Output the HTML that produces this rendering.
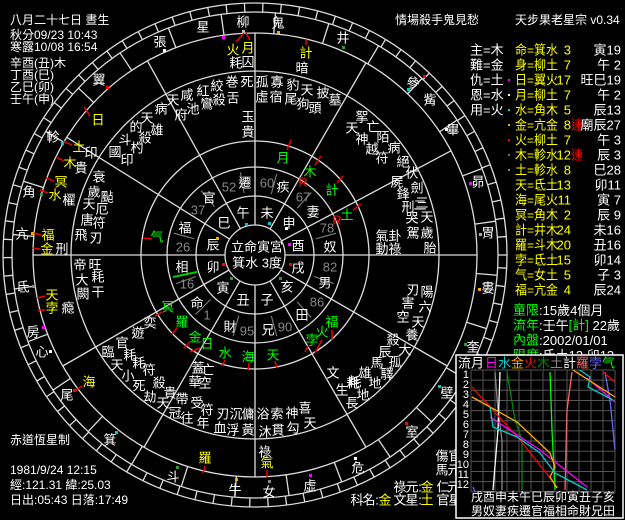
<!DOCTYPE html>
<html><head><meta charset="utf-8">
<style>
html,body{margin:0;padding:0;background:#000;}
svg{display:block}
text{font-family:"Liberation Sans","Noto Sans CJK TC","WenQuanYi Zen Hei",sans-serif;}
.c text{font-size:13px;fill:#fff;text-anchor:middle;dominant-baseline:central}
.y{fill:#ff0 !important}.g{fill:#0f0 !important}.r{fill:#f00 !important}.gr{fill:#888 !important}
.p text{font-size:13px;dominant-baseline:central}
</style></head><body>
<svg id="s" width="625" height="520" viewBox="0 0 625 520" xmlns="http://www.w3.org/2000/svg">
<rect width="625" height="520" fill="#000"/>
<g id="lines" stroke="#ddd" stroke-width="1.3" fill="none">
<circle cx="255" cy="255" r="30"/>
<circle cx="255" cy="255" r="59"/>
<circle cx="255" cy="255" r="88"/>
<circle cx="255" cy="255" r="114"/>
<circle cx="255" cy="255" r="184"/>
<circle cx="255" cy="255" r="222"/>
<circle cx="255" cy="255" r="243"/>
<circle cx="255" cy="255" r="252"/>
<line x1="173" y1="277" x2="197" y2="272" stroke="#0c0" stroke-width="2"/>
</g>
<g class="c">
<text x="257" y="247">立命寅宮</text><text x="257" y="263">箕水 3度</text>
<text x="243" y="213">午</text><text x="267" y="213">未</text><text x="289" y="223">申</text><text x="298" y="246">酉</text><text x="298" y="268">戌</text><text x="287" y="287">亥</text><text x="267" y="300">子</text><text x="243" y="300">丑</text><text x="223" y="288">寅</text><text x="213" y="267">卯</text><text x="213" y="245">辰</text><text x="224" y="223">巳</text>
<text x="245" y="183">遷</text><text x="283" y="187">疾</text><text x="313" y="212">妻</text><text x="330" y="247">奴</text><text x="325" y="283">男</text><text x="302" y="315">田</text><text x="268" y="330">兄</text><text x="230" y="327">財</text><text x="197" y="303">命</text><text x="182" y="267">相</text><text x="185" y="228">福</text><text x="209" y="198">官</text>
<text class="gr" x="229" y="187">52</text><text class="gr" x="267" y="183">60</text><text class="gr" x="303" y="197">67</text><text class="gr" x="327" y="228">78</text><text class="gr" x="330" y="267">82</text><text class="gr" x="317" y="302">86</text><text class="gr" x="285" y="327">90</text><text class="gr" x="247" y="331">95</text><text class="gr" x="207" y="315">1</text><text class="gr" x="187" y="284">16</text><text class="gr" x="183" y="247">26</text><text class="gr" x="198" y="210">37</text>
<text class="g" x="283" y="158">月</text><text class="g" x="310" y="172">木</text><text class="r" x="303" y="182">R</text><text class="g" x="332" y="190">計</text><text class="g" x="347" y="215">土</text><text class="r" x="337" y="220">R</text><text class="g" x="157" y="237">气</text>
<text class="g" x="168" y="307">冥</text><text class="g" x="182" y="322">羅</text><text class="g" x="195" y="337">金</text><text class="g" x="207" y="344">日</text><text class="g" x="225" y="353">水</text><text class="g" x="248" y="357">海</text><text class="g" x="273" y="355">天</text><text class="g" x="312" y="340">孛</text><text class="g" x="322" y="332">火</text><text class="g" x="332" y="322">福</text>
<text class="y" x="98" y="120">日</text><text class="y" x="79" y="147">土</text><text class="y" x="70" y="163">木</text><text class="y" x="61" y="182">冥</text><text class="y" x="55" y="195">水</text><text class="y" x="48" y="235">福</text><text class="y" x="47" y="249">金</text><text class="y" x="52" y="295">天</text><text class="y" x="52" y="308">孛</text><text class="y" x="89" y="382">海</text><text class="y" x="205" y="458">羅</text><text class="y" x="267" y="463">氣</text><text class="y" x="233" y="50">火</text><text class="y" x="248" y="48">月</text><text class="y" x="306" y="53">計</text>
<text x="203" y="27">星</text><text x="243" y="22">柳</text><text x="278" y="23">鬼</text><text x="160" y="42">張</text><text x="343" y="38">井</text><text x="99" y="80">翼</text><text x="413" y="83">參</text><text x="430" y="100">觜</text><text x="453" y="130">畢</text><text x="478" y="182">昴</text><text x="488" y="233">胃</text><text x="488" y="288">婁</text><text x="473" y="347">奎</text><text x="447" y="393">壁</text><text x="412" y="432">室</text><text x="358" y="468">危</text><text x="310" y="486">虛</text><text x="269" y="492">女</text><text x="235" y="490">牛</text><text x="173" y="477">斗</text><text x="110" y="440">箕</text><text x="67" y="395">尾</text><text x="42" y="352">心</text><text x="33" y="332">房</text><text x="23" y="287">氐</text><text x="22" y="234">亢</text><text x="29" y="192">角</text><text x="53" y="137">軫</text>
<text x="236" y="63">耗</text><text x="248" y="62">囚</text><text x="302" y="68">暗</text><text x="247" y="82">死</text><text x="232" y="82">巻</text><text x="233" y="98">舌</text><text x="217" y="86">絞</text><text x="219" y="100">殺</text><text x="203" y="91">紅</text><text x="207" y="104">鸞</text><text x="187" y="95">咸</text><text x="193" y="109">池</text><text x="173" y="100">天</text><text x="181" y="115">府</text><text x="161" y="109">病</text><text x="147" y="118">天</text><text x="157" y="130">雄</text><text x="136" y="127">的</text><text x="145" y="138">殺</text>
<text x="262" y="82">孤</text><text x="277" y="82">寡</text><text x="293" y="85">豹</text><text x="307" y="90">天</text><text x="323" y="93">披</text><text x="335" y="100">墓</text><text x="262" y="97">虛</text><text x="276" y="97">宿</text><text x="291" y="99">尾</text><text x="303" y="104">狗</text><text x="315" y="108">頭</text><text x="248" y="117">玉</text><text x="248" y="132">貴</text>
<text x="125" y="140">斗</text><text x="137" y="148">杓</text><text x="115" y="152">國</text><text x="127" y="160">印</text><text x="91" y="153">印</text><text x="81" y="168">貴</text><text x="99" y="177">衰</text><text x="94" y="192">歲</text><text x="107" y="197">颭</text><text x="69" y="200">櫂</text><text x="89" y="204">天</text><text x="102" y="209">厄</text><text x="87" y="220">唐</text><text x="99" y="223">符</text><text x="81" y="235">飛</text><text x="96" y="238">刃</text><text x="62" y="249">刑</text>
<text x="80" y="265">帝</text><text x="95" y="265">旺</text><text x="82" y="280">大</text><text x="98" y="277">耗</text><text x="83" y="294">闕</text><text x="98" y="292">干</text><text x="68" y="308">瘾</text>
<text x="108" y="352">臨</text><text x="122" y="343">官</text><text x="138" y="333">遊</text><text x="150" y="323">奕</text><text x="117" y="365">天</text><text x="130" y="355">耗</text><text x="128" y="376">小</text><text x="139" y="363">耗</text><text x="149" y="370">符</text><text x="139" y="386">死</text><text x="159" y="383">殺</text><text x="150" y="397">劫</text><text x="170" y="393">貴</text><text x="163" y="403">天</text><text x="182" y="399">帶</text><text x="175" y="413">冠</text><text x="197" y="403">受</text><text x="187" y="418">往</text><text x="207" y="410">符</text><text x="203" y="423">年</text><text x="195" y="382">華</text><text x="205" y="383">空</text><text x="198" y="368">蓋</text><text x="208" y="370">亡</text><text x="223" y="414">刃</text><text x="236" y="414">沉</text><text x="220" y="428">血</text><text x="233" y="430">浮</text><text x="248" y="430">黃</text><text x="248" y="414">傭</text><text x="263" y="414">浴</text><text x="277" y="414">索</text>
<text x="265" y="432">沐</text><text x="278" y="430">貫</text><text x="293" y="428">勾</text><text x="292" y="413">神</text><text x="305" y="408">喜</text><text x="310" y="423">天</text><text x="342" y="390">生</text><text x="353" y="383">耗</text><text x="352" y="403">長</text><text x="375" y="383">地</text><text x="363" y="395">地</text><text x="265" y="452">祿</text>
<text x="408" y="207">刑</text><text x="420" y="205">二</text><text x="412" y="218">哭</text><text x="427" y="217">天</text><text x="413" y="233">駕</text><text x="427" y="233">歲</text><text x="430" y="248">胎</text><text x="382" y="236">氣</text><text x="382" y="249">動</text><text x="395" y="236">卦</text><text x="395" y="249">祿</text><text x="413" y="290">刃</text><text x="427" y="292">陽</text><text x="408" y="303">害</text><text x="425" y="307">六</text><text x="403" y="317">空</text><text x="418" y="322">天</text><text x="412" y="335">養</text><text x="393" y="340">殺</text><text x="405" y="350">大</text><text x="385" y="352">辰</text><text x="395" y="362">孤</text><text x="377" y="363">馬</text><text x="387" y="374">驛</text><text x="365" y="373">雄</text><text x="355" y="382">耗</text><text x="333" y="373">文</text>
<text x="362" y="117">挐</text><text x="352" y="128">天</text><text x="373" y="127">亡</text><text x="362" y="139">神</text><text x="383" y="137">陌</text><text x="372" y="149">越</text><text x="382" y="158">符</text><text x="394" y="148">病</text><text x="403" y="162">絕</text><text x="412" y="173">伏</text><text x="397" y="182">屍</text><text x="417" y="188">劍</text><text x="403" y="194">鋒</text><text x="422" y="203">三</text>
<text x="442" y="456">傷</text><text x="455" y="456">官</text><text x="442" y="470">馬</text><text x="454" y="470">元</text>
<text x="400" y="487">祿</text><text x="412" y="487">元</text><text x="420" y="487">:</text><text class="y" x="427" y="487">金</text><text x="443" y="487">仁</text><text x="454" y="487">元</text>
<text x="357" y="500">科</text><text x="369" y="500">名</text><text x="377" y="500">:</text><text class="y" x="385" y="500">金</text><text x="400" y="500">文</text><text x="412" y="500">星</text><text x="420" y="500">:</text><text class="y" x="427" y="500">土</text><text x="443" y="500">官</text><text x="455" y="500">星</text>
</g>
<g id="ticks" stroke="#e00" stroke-width="1.5">
<line x1="236" y1="42" x2="244" y2="33"/><line x1="250" y1="40" x2="246" y2="33"/><line x1="306" y1="45" x2="306" y2="39"/>
<line x1="90" y1="116" x2="84" y2="107"/><line x1="72" y1="145" x2="63" y2="141"/><line x1="64" y1="161" x2="56" y2="157"/><line x1="54" y1="181" x2="46" y2="178"/><line x1="48" y1="193" x2="40" y2="190"/><line x1="41" y1="235" x2="33" y2="233"/><line x1="40" y1="249" x2="33" y2="248"/><line x1="45" y1="296" x2="37" y2="298"/><line x1="45" y1="310" x2="38" y2="310"/><line x1="82" y1="386" x2="75" y2="391"/><line x1="205" y1="466" x2="203" y2="473"/><line x1="267" y1="470" x2="267" y2="478"/>
<line x1="287" y1="150" x2="291" y2="140"/><line x1="315" y1="165" x2="321" y2="156"/><line x1="337" y1="183" x2="343" y2="176"/><line x1="353" y1="210" x2="361" y2="204"/><line x1="143" y1="238" x2="152" y2="239"/>
<line x1="162" y1="312" x2="155" y2="316"/><line x1="177" y1="328" x2="172" y2="334"/><line x1="190" y1="342" x2="184" y2="348"/><line x1="200" y1="348" x2="190" y2="352"/><line x1="225" y1="360" x2="222" y2="366"/><line x1="249" y1="363" x2="248" y2="370"/><line x1="275" y1="361" x2="277" y2="368"/><line x1="308" y1="346" x2="305" y2="352"/><line x1="322" y1="340" x2="315" y2="353"/><line x1="332" y1="330" x2="332" y2="340"/>
</g>
<g id="dots">
<rect x="222" y="36" width="3" height="3" fill="#f0f"/><rect x="242" y="30" width="3" height="3" fill="#bbb"/><rect x="277" y="31" width="3" height="3" fill="#fa0"/><rect x="342" y="46" width="3" height="3" fill="#393"/><rect x="163" y="49" width="3" height="3" fill="#fff"/><rect x="106" y="86" width="3" height="3" fill="#f00"/><rect x="61" y="142" width="3" height="3" fill="#0cc"/><rect x="40" y="193" width="3" height="3" fill="#393"/><rect x="31" y="232" width="3" height="3" fill="#fa0"/><rect x="32" y="285" width="3" height="3" fill="#888"/><rect x="42" y="326" width="3" height="3" fill="#f0f"/><rect x="49" y="350" width="3" height="3" fill="#fff"/><rect x="73" y="389" width="3" height="3" fill="#f00"/><rect x="115" y="431" width="3" height="3" fill="#0cc"/><rect x="176" y="466" width="3" height="3" fill="#393"/><rect x="235" y="478" width="3" height="3" fill="#fa0"/><rect x="268" y="480" width="3" height="3" fill="#888"/><rect x="309" y="474" width="3" height="3" fill="#f0f"/><rect x="354" y="457" width="3" height="3" fill="#fff"/><rect x="405" y="422" width="3" height="3" fill="#f00"/><rect x="438" y="385" width="3" height="3" fill="#0cc"/><rect x="464" y="343" width="3" height="3" fill="#393"/><rect x="478" y="288" width="3" height="3" fill="#fa0"/><rect x="479" y="233" width="3" height="3" fill="#aaa"/><rect x="469" y="182" width="3" height="3" fill="#f0f"/><rect x="445" y="128" width="3" height="3" fill="#fff"/><rect x="423" y="75" width="3" height="3" fill="#f00"/><rect x="407" y="88" width="3" height="3" fill="#0cc"/>
<rect x="288" y="243" width="3" height="3" fill="#f0f"/><rect x="245" y="223" width="3" height="3" fill="#0cc"/><rect x="216" y="237" width="3" height="3" fill="#fa0"/><rect x="222" y="263" width="3" height="3" fill="#f00"/><rect x="230" y="277" width="3" height="3" fill="#393"/><rect x="285" y="227" width="3" height="3" fill="#fff"/><rect x="268" y="222" width="3" height="3" fill="#0cc"/><rect x="289" y="263" width="3" height="3" fill="#f00"/><rect x="279" y="277" width="3" height="3" fill="#393"/>
</g>
<g fill="#fff" font-size="12" style="dominant-baseline:central">
<text x="10" y="20">八月二十七日 晝生</text>
<text x="10" y="35">秋分09/23 10:43</text>
<text x="10" y="47">寒露10/08 16:54</text>
<text x="10" y="63">辛酉(丑)木</text>
<text x="10" y="75">丁酉(巳)</text>
<text x="10" y="87">乙巳(卯)</text>
<text x="10" y="99">壬午(申)</text>
<text x="10" y="440">赤道恆星制</text>
<text x="10" y="470">1981/9/24 12:15</text>
<text x="10" y="485">經:121.31 緯:25.03</text>
<text x="10" y="500">日出:05:43 日落:17:49</text>
<text x="395" y="20">情場殺手鬼見愁</text>
<text x="515" y="20">天步果老星宗 v0.34</text>
</g>
<g class="p">
<g fill="#fff"><text x="470" y="50">主=木</text><text x="470" y="65">難=金</text><text x="470" y="80">仇=土</text><text x="470" y="95">恩=水</text><text x="470" y="110">用=火</text></g>
<g fill="#ff0" textLength="43" lengthAdjust="spacingAndGlyphs">
<text x="515" y="50" textLength="43" lengthAdjust="spacingAndGlyphs">命=箕水</text><text x="515" y="65" textLength="43" lengthAdjust="spacingAndGlyphs">身=柳土</text><text x="515" y="80" textLength="43" lengthAdjust="spacingAndGlyphs">日=翼火</text><text x="515" y="95" textLength="43" lengthAdjust="spacingAndGlyphs">月=柳土</text><text x="515" y="110" textLength="43" lengthAdjust="spacingAndGlyphs">水=角木</text><text x="515" y="125" textLength="43" lengthAdjust="spacingAndGlyphs">金=亢金</text><text x="515" y="140" textLength="43" lengthAdjust="spacingAndGlyphs">火=柳土</text><text x="515" y="155" textLength="43" lengthAdjust="spacingAndGlyphs">木=軫水</text><text x="515" y="170" textLength="43" lengthAdjust="spacingAndGlyphs">土=軫水</text><text x="515" y="185" textLength="43" lengthAdjust="spacingAndGlyphs">天=氐土</text><text x="515" y="200" textLength="43" lengthAdjust="spacingAndGlyphs">海=尾火</text><text x="515" y="215" textLength="43" lengthAdjust="spacingAndGlyphs">冥=角木</text><text x="515" y="230" textLength="43" lengthAdjust="spacingAndGlyphs">計=井木</text><text x="515" y="245" textLength="43" lengthAdjust="spacingAndGlyphs">羅=斗木</text><text x="515" y="260" textLength="43" lengthAdjust="spacingAndGlyphs">孛=氐土</text><text x="515" y="275" textLength="43" lengthAdjust="spacingAndGlyphs">气=女土</text><text x="515" y="290" textLength="43" lengthAdjust="spacingAndGlyphs">福=亢金</text>
</g>
<g fill="#ff0" text-anchor="end">
<text x="571" y="50">3</text><text x="571" y="65">7</text><text x="571" y="80">17</text><text x="571" y="95">7</text><text x="571" y="110">5</text><text x="571" y="125">8</text><text x="571" y="140">7</text><text x="571" y="155">12</text><text x="571" y="170">8</text><text x="571" y="185">13</text><text x="571" y="200">11</text><text x="571" y="215">2</text><text x="571" y="230">24</text><text x="571" y="245">20</text><text x="571" y="260">15</text><text x="571" y="275">5</text><text x="571" y="290">4</text>
</g>
<g fill="#f00"><text x="571" y="125" textLength="12" lengthAdjust="spacingAndGlyphs">速</text><text x="571" y="155" textLength="12" lengthAdjust="spacingAndGlyphs">速</text></g>
<g fill="#fff" text-anchor="end">
<text x="621" y="50">寅19</text><text x="621" y="65">午 2</text><text x="621" y="80">旺巳19</text><text x="621" y="95">午 2</text><text x="621" y="110">辰13</text><text x="621" y="125">廟辰27</text><text x="621" y="140">午 3</text><text x="621" y="155">辰 3</text><text x="621" y="170">巳28</text><text x="621" y="185">卯11</text><text x="621" y="200">寅 7</text><text x="621" y="215">辰 9</text><text x="621" y="230">未16</text><text x="621" y="245">丑16</text><text x="621" y="260">卯14</text><text x="621" y="275">子 3</text><text x="621" y="290">辰24</text>
</g>
<rect x="508" y="79" width="2" height="2" fill="#f0f"/>
<rect x="508" y="94" width="2" height="2" fill="#fff"/><rect x="508" y="109" width="2" height="2" fill="#0cc"/><rect x="508" y="124" width="2" height="2" fill="#fa0"/><rect x="508" y="139" width="2" height="2" fill="#f00"/><rect x="508" y="154" width="2" height="2" fill="#393"/><rect x="508" y="169" width="2" height="2" fill="#888"/>
<text x="513" y="310" fill="#0f0">童限<tspan fill="#fff">:15歲4個月</tspan></text>
<text x="513" y="325" fill="#0f0">流年<tspan fill="#fff">:壬午</tspan>[計]<tspan fill="#fff"> 22歲</tspan></text>
<text x="513" y="340" fill="#0f0">內盤<tspan fill="#fff">:2002/01/01</tspan></text>
<text x="513" y="355" fill="#0f0">限度<tspan fill="#fff">:氐土13 卯13</tspan></text>
</g>
<rect x="456" y="355" width="167" height="163" fill="#000" stroke="#fff" stroke-width="1.5"/>
<g font-size="13" style="dominant-baseline:central">
<text x="458" y="363" fill="#fff">流月</text>
<text x="485" y="363" fill="#f0f">日</text><text x="498" y="363" fill="#0cc">水</text><text x="511" y="363" fill="#fa0">金</text><text x="524" y="363" fill="#f00">火</text><text x="537" y="363" fill="#080">木</text><text x="550" y="363" fill="#888">土</text><text x="563" y="363" fill="#fff">計</text><text x="576" y="363" fill="#f66">羅</text><text x="589" y="363" fill="#66f">孛</text><text x="602" y="363" fill="#0f0">气</text>
</g>
<g id="grid" stroke="#555" stroke-width="1"></g>
<g fill="#fff" font-size="11" text-anchor="end" style="dominant-baseline:central">
<text x="469" y="375">1</text><text x="469" y="385">2</text><text x="469" y="395">3</text><text x="469" y="405">4</text><text x="469" y="415">5</text><text x="469" y="425">6</text><text x="469" y="435">7</text><text x="469" y="445">8</text><text x="469" y="455">9</text><text x="469" y="465">10</text><text x="469" y="475">11</text><text x="469" y="485">12</text>
</g>
<g fill="none" stroke-width="1.3">
<polyline stroke="#888" points="495,372 498,410 502,440 502,490"/>
<polyline stroke="#fff" points="500,372 498,430 493,490"/>
<polyline stroke="#080" points="507,372 515,420 522,440 522,490"/>
<polyline stroke="#0f0" points="550,372 552,430 555,490"/>
<polyline stroke="#f66" points="572,372 567,410 565,490"/>
<polyline stroke="#66f" points="605,372 610,400 615,450"/><polyline stroke="#66f" points="473,487 475,492"/>
<polyline stroke="#f00" points="472,387 520,440 558,488"/><polyline stroke="#f00" points="603,372 615,382"/>
<polyline stroke="#f0f" points="490,417 540,450 587,487"/><polyline stroke="#f0f" points="587,378 615,402"/>
<polyline stroke="#fa0" points="472,397 517,422 550,453 555,467 550,477 557,488"/><polyline stroke="#fa0" points="573,370 615,397"/>
<polyline stroke="#0cc" points="490,407 493,427 517,437 540,453 555,473 587,490"/><polyline stroke="#0cc" points="580,370 590,377 588,387 613,400"/>
</g>
<g fill="#fff" font-size="12" style="dominant-baseline:central">
<text x="471" y="497">戌酉申未午巳辰卯寅丑子亥</text>
<text x="471" y="511">男奴妻疾遷官福相命財兄田</text>
</g>
</svg>
<script>
(function(){
var NS="http://www.w3.org/2000/svg",cx=255,cy=255,L=document.getElementById("lines");
function ln(a,r1,r2,col,w){var t=a*Math.PI/180,e=document.createElementNS(NS,"line");
e.setAttribute("x1",cx+r1*Math.cos(t));e.setAttribute("y1",cy-r1*Math.sin(t));
e.setAttribute("x2",cx+r2*Math.cos(t));e.setAttribute("y2",cy-r2*Math.sin(t));
if(col)e.setAttribute("stroke",col);if(w)e.setAttribute("stroke-width",w);L.appendChild(e);}
[0,28,60,90,119,148,180,210,240,270,300,330].forEach(function(a){ln(a,30,222);});
for(var i=0;i<28;i++){ln(8+i*12.86,222,243);}
for(var a=0;a<360;a+=4.2){ln(a,243,252);}
[100,75,48,15,-20,-48,-75,-105,-135,-160,-195,-230].forEach(function(a){ln(a,63,84,"#777",1.2);});
var G=document.getElementById("grid");
for(var i=0;i<=12;i++){var x=471+i*12,e=document.createElementNS(NS,"line");e.setAttribute("x1",x);e.setAttribute("x2",x);e.setAttribute("y1",370);e.setAttribute("y2",492);G.appendChild(e);
var y=370+i*10.15,f=document.createElementNS(NS,"line");f.setAttribute("x1",471);f.setAttribute("x2",615);f.setAttribute("y1",y);f.setAttribute("y2",y);G.appendChild(f);}
})();
</script>
</body></html>
